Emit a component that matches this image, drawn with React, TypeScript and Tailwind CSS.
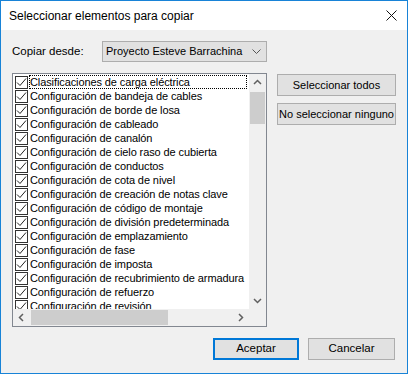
import React from "react";

const ITEMS = [
  "Clasificaciones de carga eléctrica",
  "Configuración de bandeja de cables",
  "Configuración de borde de losa",
  "Configuración de cableado",
  "Configuración de canalón",
  "Configuración de cielo raso de cubierta",
  "Configuración de conductos",
  "Configuración de cota de nivel",
  "Configuración de creación de notas clave",
  "Configuración de código de montaje",
  "Configuración de división predeterminada",
  "Configuración de emplazamiento",
  "Configuración de fase",
  "Configuración de imposta",
  "Configuración de recubrimiento de armadura",
  "Configuración de refuerzo",
  "Configuración de revisión",
];

const Chevron = ({ dir }: { dir: "up" | "down" | "left" | "right" }) => {
  const pts = {
    up: "1,6 4.5,2.5 8,6",
    down: "1,3 4.5,6.5 8,3",
    left: "6,1 2.5,4.5 6,8",
    right: "3,1 6.5,4.5 3,8",
  }[dir];
  return (
    <svg width="9" height="9" viewBox="0 0 9 9">
      <polyline points={pts} fill="none" stroke="#606060" strokeWidth="1.5" />
    </svg>
  );
};

const CheckBox = () => (
  <div className="w-[13px] h-[13px] border border-[#333333] bg-white flex items-center justify-center shrink-0">
    <svg width="11" height="11" viewBox="0 0 11 11">
      <polyline points="1,5.5 4,8.5 10,1.5" fill="none" stroke="#222" strokeWidth="1" />
    </svg>
  </div>
);

const Button = ({ label, isDefault }: { label: string; isDefault?: boolean }) => (
  <div
    className={`${
      isDefault ? "border-2 border-[#0078d7]" : "border border-[#adadad]"
    } h-full bg-[#e1e1e1] flex items-center justify-center text-black whitespace-nowrap`}
  >
    {label}
  </div>
);

export default function App() {
  return (
    <div
      className="w-[408px] h-[374px] border border-[#1883d7] bg-[#f0f0f0] flex flex-col text-[11.5px] text-black overflow-hidden"
      style={{ fontFamily: '"Liberation Sans", Arial, sans-serif' }}
    >
      {/* title bar */}
      <div className="h-[29px] bg-white flex items-center justify-between pl-[8px] pr-[10px] shrink-0">
        <span className="text-[12px]">Seleccionar elementos para copiar</span>
        <svg width="11" height="11" viewBox="0 0 11 11">
          <path d="M0.5 0.5 L10.5 10.5 M10.5 0.5 L0.5 10.5" stroke="#111" strokeWidth="1" />
        </svg>
      </div>

      {/* copiar desde */}
      <div className="flex items-center mt-[11px] pl-[11px] h-[21px]">
        <span className="w-[90px] whitespace-nowrap">Copiar desde:</span>
        <div className="w-[165px] h-[21px] border border-[#adadad] bg-[#e1e1e1] flex items-center justify-between pl-[3px] pr-[5px] text-[11px]">
          <span className="whitespace-nowrap">Proyecto Esteve Barrachina</span>
          <svg width="9" height="6" viewBox="0 0 9 6">
            <polyline points="0.5,0.5 4.5,4.5 8.5,0.5" fill="none" stroke="#555" strokeWidth="1" />
          </svg>
        </div>
      </div>

      {/* main area */}
      <div className="flex mt-[11px] pl-[11px]">
        <div className="w-[255px] h-[254px] border border-[#828790] bg-white grid grid-cols-[236px_17px] grid-rows-[235px_17px]">
          <div className="overflow-hidden pt-[1px] pl-[2px] text-[11px] tracking-[-0.1px]">
            {ITEMS.map((item, i) => (
              <div key={item} className="h-[14px] flex items-center gap-[1px] whitespace-nowrap">
                <CheckBox />
                <span
                  className={`${
                    i === 0 ? "outline outline-1 outline-dotted outline-black -outline-offset-1 w-[218px]" : ""
                  } h-[14px] leading-[14px] pl-[1px]`}
                >
                  {item}
                </span>
              </div>
            ))}
          </div>
          {/* vertical scrollbar */}
          <div className="bg-[#f0f0f0] flex flex-col">
            <div className="h-[17px] flex items-center justify-center">
              <Chevron dir="up" />
            </div>
            <div className="flex-1 px-[1px] pt-[1px]">
              <div className="h-[32px] bg-[#cdcdcd]" />
            </div>
            <div className="h-[17px] flex items-center justify-center">
              <Chevron dir="down" />
            </div>
          </div>
          {/* horizontal scrollbar */}
          <div className="bg-[#f0f0f0] flex">
            <div className="w-[17px] flex items-center justify-center">
              <Chevron dir="left" />
            </div>
            <div className="flex-1 py-[1px] pl-[1px]">
              <div className="w-[137px] h-full bg-[#cdcdcd]" />
            </div>
            <div className="w-[17px] flex items-center justify-center">
              <Chevron dir="right" />
            </div>
          </div>
          <div className="bg-[#f0f0f0]" />
        </div>

        <div className="flex flex-col gap-[7px] ml-[10px] mt-[1px] w-[119px] text-[11px]">
          <div className="h-[22px]">
            <Button label="Seleccionar todos" />
          </div>
          <div className="h-[22px]">
            <Button label="No seleccionar ninguno" />
          </div>
        </div>
      </div>

      {/* bottom buttons */}
      <div className="flex justify-end gap-[9px] mt-[11px] pr-[12px]">
        <div className="w-[86px] h-[22px]">
          <Button label="Aceptar" isDefault />
        </div>
        <div className="w-[87px] h-[22px]">
          <Button label="Cancelar" />
        </div>
      </div>
    </div>
  );
}
